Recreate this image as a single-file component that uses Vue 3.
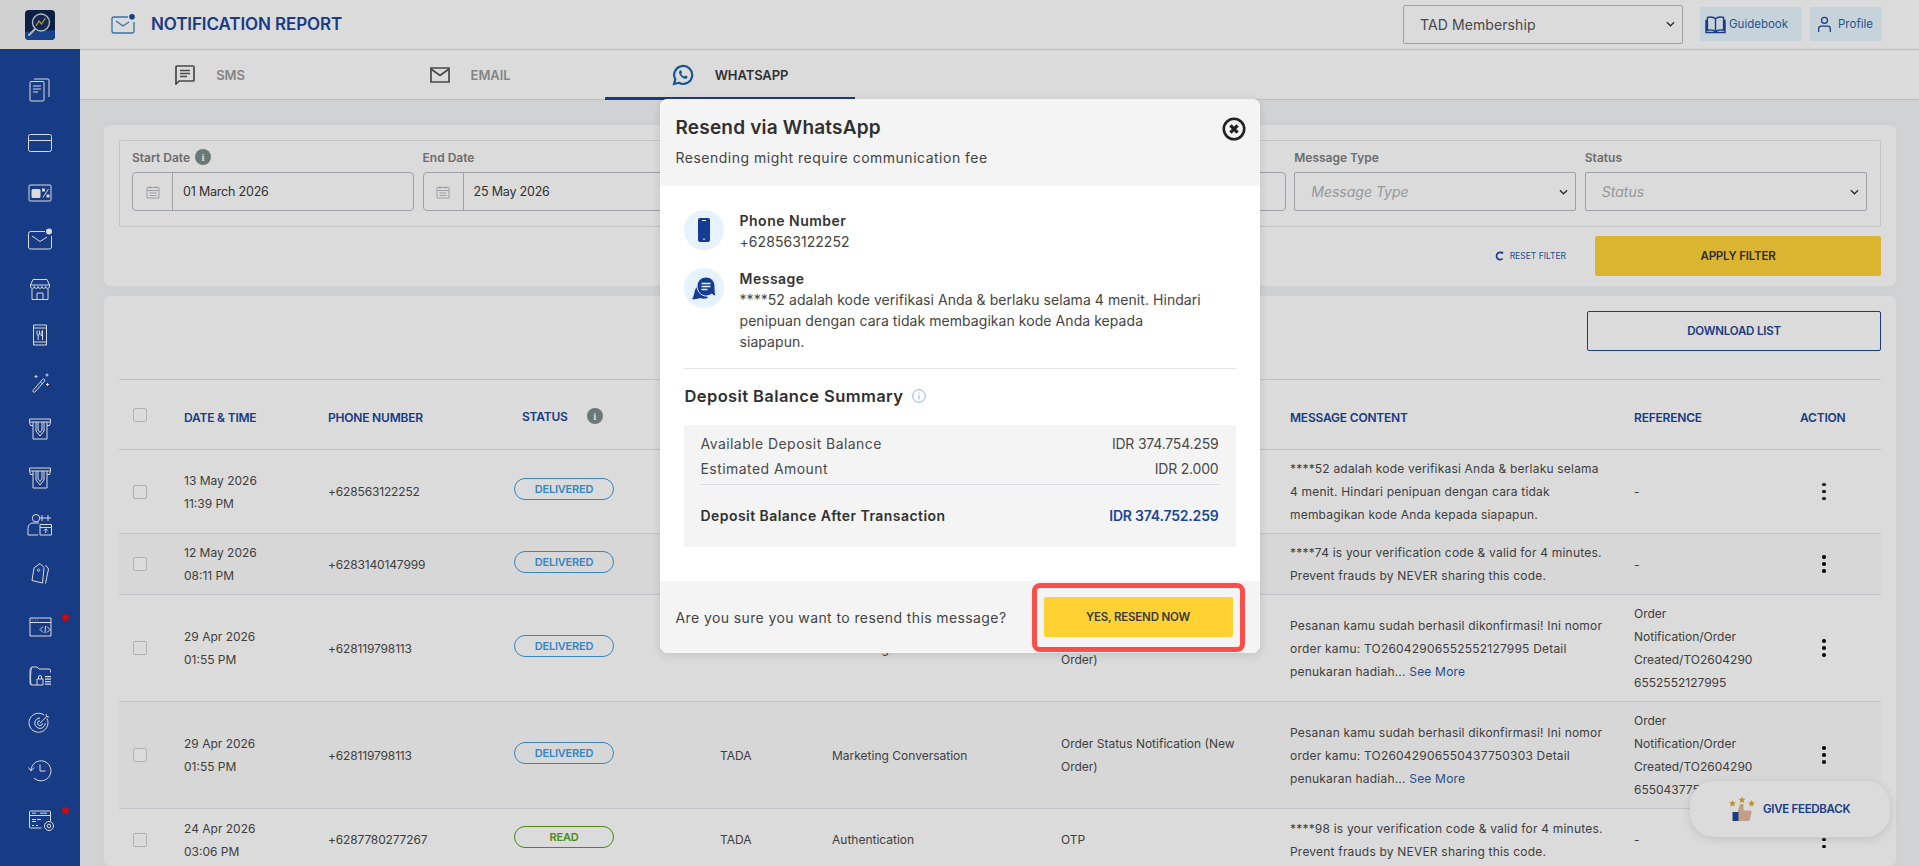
<template>
<div class="app">
    <aside class="sidebar">
        <div class="logo-wrap">
            <svg class="logo" viewBox="0 0 30 30">
                <rect width="30" height="30" rx="4" fill="#10264f"/>
                <path d="M0 22L30 20V26a4 4 0 0 1-4 4H4a4 4 0 0 1-4-4Z" fill="#1d4da3"/>
                <circle cx="16" cy="12.5" r="8.5" fill="#17305f" stroke="#cfd6df" stroke-width="1.4"/>
                <path d="M11 16l3-5 2.5 3 4-6" fill="none" stroke="#d9b93a" stroke-width="1.2"/>
                <path d="M10 19l-6 6" stroke="#cfd6df" stroke-width="2" stroke-linecap="round"/>
            </svg>
        </div>
        <nav class="side-nav">
            <div
                v-for="(item, index) in sideIcons"
                :key="index"
                class="side-item"
                :style="{ marginTop: item.gap + 'px' }"
            >
                <svg class="side-icon" viewBox="0 0 28 28">
                    <path :d="item.d" />
                    <path v-if="item.fill" :d="item.fill" class="solid" />
                </svg>
                <span v-if="item.alert" class="alert-dot"></span>
            </div>
        </nav>
    </aside>

    <div class="main">
        <header class="topbar">
            <div class="page-title">
                <svg class="title-icon" viewBox="0 0 24 20">
                    <path d="M17 3H3a2 2 0 0 0-2 2v12a2 2 0 0 0 2 2h18a2 2 0 0 0 2-2V8M5 7l7 5 6-4" fill="none" stroke="#3f86c2" stroke-width="1.3"/>
                    <circle cx="21" cy="2.8" r="2.8" fill="#1a4a9e"/>
                </svg>
                <h1>NOTIFICATION REPORT</h1>
            </div>
            <div class="top-actions">
                <div class="merchant-select">
                    <span>TAD Membership</span>
                    <svg class="chev" viewBox="0 0 10 6"><path d="M1 1l4 4 4-4" /></svg>
                </div>
                <a class="help-btn guide">
                    <svg viewBox="0 0 22 20" class="help-icon">
                        <path d="M11 4C9 2 5 2 2.5 2.5V16C5 15.500 9 15.500 11 17.500 13 15.500 17 15.500 19.500 16V2.500C17 2 13 2 11 4ZM11 4V17.500M1 5V18.500H21V5" />
                    </svg>
                    Guidebook
                </a>
                <a class="help-btn profile">
                    <svg viewBox="0 0 18 20" class="help-icon">
                        <circle cx="9" cy="5" r="3.600" />
                        <path d="M2 19V15a3 3 0 0 1 3-3h8a3 3 0 0 1 3 3v4" />
                    </svg>
                    Profile
                </a>
            </div>
        </header>

        <div class="tabs">
            <div class="tab">
                <svg class="tab-icon" viewBox="0 0 20 20">
                    <path d="M1 19V2a1 1 0 0 1 1-1h16a1 1 0 0 1 1 1v13a1 1 0 0 1-1 1H4ZM5 5.500h10M5 8.500h10M5 11.500h7" />
                </svg>
                <span>SMS</span>
            </div>
            <div class="tab">
                <svg class="tab-icon" viewBox="0 0 20 20">
                    <path d="M1 3h18v14H1ZM1 4l9 6.500L19 4" />
                </svg>
                <span>EMAIL</span>
            </div>
            <div class="tab active">
                <svg class="tab-icon wa" viewBox="0 0 22 22">
                    <path d="M2 20l1.300-4.700A9 9 0 1 1 6.800 18.800Z" />
                    <path class="wa-fill" d="M8 6.500c-1 .8-1.300 2-.6 3.500 1 2 2.600 3.600 4.600 4.500 1.500.6 2.700.3 3.400-.8.300-.5.300-1 0-1.200l-1.800-.9c-.3-.1-.6 0-.8.3l-.6.7c-1.300-.5-2.400-1.500-3-2.800l.6-.7c.2-.2.2-.5.100-.8L9.200 6.600c-.2-.4-.8-.4-1.200-.1Z" />
                </svg>
                <span>WHATSAPP</span>
            </div>
        </div>

        <div class="content">
            <section class="card filter-card">
                <div class="filter-box">
                    <div v-for="field in filters" :key="field.label" class="field">
                        <label>
                            {{ field.label }}
                            <span v-if="field.info" class="info-dot small">i</span>
                        </label>
                        <div v-if="field.date" class="input date">
                            <span class="cal">
                                <svg viewBox="0 0 14 14"><path d="M1 2.500h12v10.500H1ZM1 5.500h12M4 1v2.500M10 1v2.500M3.500 8h7M3.500 10.500h7" /></svg>
                            </span>
                            <span class="date-value">{{ field.value }}</span>
                        </div>
                        <div v-else-if="field.text" class="input text-input">
                            <span class="placeholder">{{ field.value }}</span>
                        </div>
                        <div v-else class="input select">
                            <span class="placeholder">{{ field.value }}</span>
                            <svg class="chev" viewBox="0 0 10 6"><path d="M1 1l4 4 4-4" /></svg>
                        </div>
                    </div>
                </div>
                <div class="filter-actions">
                    <a class="reset">
                        <svg viewBox="0 0 10 10"><path d="M8.500 2.200A4 4 0 1 0 8.500 7.800" /><path d="M6.500 0.800l2.500 1.900L9 0Z" class="solid-blue" /></svg>
                        RESET FILTER
                    </a>
                    <button class="apply">APPLY FILTER</button>
                </div>
            </section>

            <section class="card list-card">
                <div class="list-head">
                    <button class="download">DOWNLOAD LIST</button>
                </div>
                <div class="row head">
                    <div class="c-check"><span class="check"></span></div>
                    <div>DATE &amp; TIME</div>
                    <div>PHONE NUMBER</div>
                    <div class="status-head">STATUS <span class="info-dot">i</span></div>
                    <div>SENDER</div>
                    <div>CATEGORY</div>
                    <div>TEMPLATE</div>
                    <div>MESSAGE CONTENT</div>
                    <div>REFERENCE</div>
                    <div class="action-head">ACTION</div>
                </div>
                <div
                    v-for="(row, index) in rows"
                    :key="index"
                    class="row"
                    :class="{ tinted: index % 2 === 1 }"
                    :style="{ height: row.height + 'px' }"
                >
                    <div class="c-check"><span class="check"></span></div>
                    <div class="lines">{{ row.date }}<br>{{ row.time }}</div>
                    <div class="phone">{{ row.phone }}</div>
                    <div><span class="badge" :class="row.status.toLowerCase()">{{ row.status }}</span></div>
                    <div>TADA</div>
                    <div>{{ row.category }}</div>
                    <div class="lines">{{ row.template }}</div>
                    <div class="lines message">{{ row.message }}<a v-if="row.more" class="more"> See More</a></div>
                    <div class="lines">{{ row.reference }}</div>
                    <div class="c-action"><span class="dots"><i></i><i></i><i></i></span></div>
                </div>
            </section>
        </div>
    </div>

    <button class="feedback">
        <svg class="fb-icon" viewBox="0 0 26 26">
            <path d="M3.500 7.500m0-3.500l1 2.300 2.400.2-1.800 1.600.6 2.400-2.200-1.300-2.200 1.300.6-2.400L.100 6.500l2.400-.2ZM13 .500l1 2.300 2.400.2-1.800 1.600.6 2.400-2.200-1.300-2.200 1.300.6-2.400-1.800-1.600 2.400-.2ZM22.500 4l1 2.300 2.400.2-1.800 1.600.6 2.400-2.200-1.300-2.200 1.300.6-2.400-1.800-1.600 2.400-.2Z" fill="#e0a92a"/>
            <path d="M11 8h3.500v6.500H21a1.500 1.500 0 0 1 1.500 1.700L21 23.500a2 2 0 0 1-2 1.500H9V14.500Z" fill="#e3b99c"/>
            <rect x="3.500" y="16" width="6" height="9" fill="#1a4a9e"/>
        </svg>
        GIVE FEEDBACK
    </button>

    <div class="overlay">
        <div class="modal">
            <div class="modal-head">
                <div>
                    <h2>Resend via WhatsApp</h2>
                    <p>Resending might require communication fee</p>
                </div>
                <svg class="close" viewBox="0 0 20 20">
                    <circle cx="10" cy="10" r="8.500" />
                    <path d="M7 7l6 6M13 7l-6 6" class="close-x" />
                </svg>
            </div>
            <div class="modal-body">
                <div class="detail">
                    <span class="detail-icon">
                        <svg viewBox="0 0 12 24" class="phone-glyph">
                            <rect x="0" y="0" width="12" height="24" rx="2" fill="#163b95"/>
                            <rect x="4" y="2" width="4" height="1" fill="#e6f3fe"/>
                            <rect x="5.300" y="20.500" width="1.400" height="1.400" fill="#e6f3fe"/>
                        </svg>
                    </span>
                    <div>
                        <strong>Phone Number</strong>
                        <p>+628563122252</p>
                    </div>
                </div>
                <div class="detail">
                    <span class="detail-icon">
                        <svg viewBox="0 0 24 24" class="chat-glyph">
                            <path d="M5 11C2 13 3 19 0 23c3 .5 6 0 8-1 3 1 6 1 8-.5Z" fill="#163b95"/>
                            <path d="M14 1c5 0 9 4 9 9 0 4 0 7 1 10-2 0-3-1-4-2-2 1-4 2-6 2-5 0-9-5-9-10s4-9 9-9Z" fill="#163b95" stroke="#e6f3fe" stroke-width="1"/>
                            <path d="M9.500 7.500h9M9.500 10.500h9M9.500 13.500h6" stroke="#e6f3fe" stroke-width="1.400" fill="none"/>
                        </svg>
                    </span>
                    <div>
                        <strong>Message</strong>
                        <p>****52 adalah kode verifikasi Anda &amp; berlaku selama 4 menit. Hindari<br>penipuan dengan cara tidak membagikan kode Anda kepada<br>siapapun.</p>
                    </div>
                </div>
                <div class="divider"></div>
                <h3>
                    Deposit Balance Summary
                    <svg class="sum-info" viewBox="0 0 14 14">
                        <circle cx="7" cy="7" r="6.300" />
                        <path d="M7 6v4.500M7 3.500v1.200" />
                    </svg>
                </h3>
                <div class="summary">
                    <div class="sum-row"><span>Available Deposit Balance</span><span class="amount">IDR 374.754.259</span></div>
                    <div class="sum-row"><span>Estimated Amount</span><span class="amount">IDR 2.000</span></div>
                    <div class="sum-total"><strong>Deposit Balance After Transaction</strong><strong class="blue">IDR 374.752.259</strong></div>
                </div>
            </div>
            <div class="modal-foot">
                <span>Are you sure you want to resend this message?</span>
                <div class="highlight">
                    <button class="resend">YES, RESEND NOW</button>
                </div>
            </div>
        </div>
    </div>
</div>
</template>

<script setup>
const sideIcons = [
    { gap: 1, d: 'M5 5.500h12a1 1 0 0 1 1 1V24a1 1 0 0 1-1 1H5a1 1 0 0 1-1-1V6.500a1 1 0 0 1 1-1ZM8 3h14a1 1 0 0 1 1 1v17M7 10h8M7 13h8M7 16h5' },
    { gap: 13, d: 'M4.500 5.500h19a2 2 0 0 1 2 2v13a2 2 0 0 1-2 2h-19a2 2 0 0 1-2-2v-13a2 2 0 0 1 2-2ZM2.500 11.500h23' },
    { gap: 10, d: 'M4 6h20a1 1 0 0 1 1 1v14a1 1 0 0 1-1 1H4a1 1 0 0 1-1-1V7a1 1 0 0 1 1-1ZM22.500 10L17 18.500', fill: 'M7 10h6a1.500 1.500 0 0 1 1.500 1.500v6a1.500 1.500 0 0 1-1.500 1.500H7a1.500 1.500 0 0 1-1.500-1.500v-6A1.500 1.500 0 0 1 7 10ZM16 9.500h3v3h-3ZM20.500 15.500h3v3h-3Z' },
    { gap: 7, d: 'M19 5.500H4.500a2 2 0 0 0-2 2V21a2 2 0 0 0 2 2h19a2 2 0 0 0 2-2V10M6 10l8 5.500 7-4.500', fill: 'M23 2.500a3 3 0 1 1 0 6 3 3 0 0 1 0-6Z' },
    { gap: 9, d: 'M7 4.500h14l2.500 5.500H4.500ZM4.500 10v1.500a1.900 1.900 0 0 0 3.800 0 1.900 1.900 0 0 0 3.800 0 1.900 1.900 0 0 0 3.800 0 1.900 1.900 0 0 0 3.800 0 1.900 1.900 0 0 0 3.800 0V10M6 14v10.500h16V14M11 24.500V18h6v6.500' },
    { gap: 6, d: 'M7.500 4h13v20h-13ZM7.500 7h13M7.500 21h13M11 9.500v3.500a1.200 1.200 0 0 0 2.400 0V9.500M12.200 14v5M16.500 19V9.500c-1 1-1.500 2.500-1.500 5h1.500M14 22.500h0' },
    { gap: 7, d: 'M7 22.500l9.500-11a1.300 1.300 0 0 1 2 1.700L9 24a1.300 1.300 0 0 1-2-1.500ZM14.500 14l2 1.800M10 7v3M8.500 8.500h3M21 5.500v3M19.500 7h3M21.500 15v3M20 16.500h3' },
    { gap: 7, d: 'M3.500 4h21v3.500l-1 3h-2.500M7 10.500H4.500l-1-3V4M3.500 7h21M7 7v17h14V7M10 7v9l4 5 4-5V7M12 7v8l2 2.500 2-2.500V7' },
    { gap: 9, d: 'M3.500 4h21v3.500l-1 3h-2.500M7 10.500H4.500l-1-3V4M3.500 7h21M7 7v17h14V7M10 7v9l4 5 4-5V7M12 7v8l2 2.500 2-2.500V7' },
    { gap: 7, d: 'M10 3.500a3.700 3.700 0 1 1 0 7.400 3.700 3.700 0 0 1 0-7.400ZM12 24H2v-7a5 5 0 0 1 5-5h6M16 4v6M13 7h6M22 4v6M19 7h6M14 13.500h11.500V24H14ZM14 16.500h11.500M19.800 22v-4M18 19.500l1.800-1.800 1.800 1.800' },
    { gap: 9, d: 'M14 3.500l4 4-1.500 15.500-10.500-2.500 2-12.500ZM12.500 9a1.200 1.200 0 1 0 .1 0ZM19.500 5l3 4-3 14.500' },
    { gap: 13, alert: true, d: 'M4 5h21v18H4ZM4 9.500h21M17 13.500l-3 3 3 3M21 13.500l3 3-3 3M19.500 13l-.5 7M6.500 7.200h.5M9 7.200h.5M11.500 7.200h.5' },
    { gap: 8, d: 'M4 11v11a2 2 0 0 0 2 2h5M4 11c0-3 .5-5 2-5h5l2 2h10a1.500 1.500 0 0 1 1.500 1.500v2M6 6.500C5 8 4 14 5 24M11 24h6v-6h-6ZM12.500 18v-2a1.500 1.500 0 0 1 3 0v2', fill: 'M19 15h6v1.200h-6ZM19 17.500h6v1.200h-6ZM19 20h6v1.200h-6ZM19 22.500h6v1.200h-6Z' },
    { gap: 8, d: 'M21 9.500a9.500 9.500 0 1 1-3-3.500M14 9a5.200 5.200 0 1 0 5.200 5.200M14 11.800a2.400 2.400 0 1 0 2.400 2.400M14 14.200l7-7M20 5l.5 2.500L23 8' },
    { gap: 7, d: 'M5 14a10 10 0 1 1 3 8M2.500 11.500L5 15l3-3.500M14 8.500V15h5.500' },
    { gap: 10, alert: true, d: 'M4.500 5h19a1 1 0 0 1 1 1v9M4.500 5a1 1 0 0 0-1 1v15a1 1 0 0 0 1 1h11M3.500 9.500h21M6 7.200h4M14 7.200h7M6 13.500h4M6 15.500h4M11 13.500h4M6 19.500h2M10 19.500h2M23 15.500a4.500 4.500 0 1 1 0 9 4.500 4.500 0 0 1 0-9ZM23 18.200a1.800 1.800 0 1 1 0 3.600 1.800 1.800 0 0 1 0-3.600Z' }
]

const filters = [
    { label: 'Start Date', value: '01 March 2026', date: true, info: true },
    { label: 'End Date', value: '25 May 2026', date: true },
    { label: 'Sender', value: 'Sender' },
    { label: 'Phone Number', value: 'Phone Number', text: true },
    { label: 'Message Type', value: 'Message Type' },
    { label: 'Status', value: 'Status' }
]

const otp = 'Prevent frauds by NEVER sharing this code.'
const orderTemplate = 'Order Status Notification (New\nOrder)'

const rows = [
    {
        height: 84, date: '13 May 2026', time: '11:39 PM', phone: '+628563122252', status: 'DELIVERED',
        category: 'Authentication', template: 'OTP',
        message: '****52 adalah kode verifikasi Anda & berlaku selama\n4 menit. Hindari penipuan dengan cara tidak\nmembagikan kode Anda kepada siapapun.',
        reference: '-'
    },
    {
        height: 61, date: '12 May 2026', time: '08:11 PM', phone: '+6283140147999', status: 'DELIVERED',
        category: 'Authentication', template: 'OTP',
        message: '****74 is your verification code & valid for 4 minutes.\n' + otp,
        reference: '-'
    },
    {
        height: 107, date: '29 Apr 2026', time: '01:55 PM', phone: '+628119798113', status: 'DELIVERED',
        category: 'Marketing Conversation', template: orderTemplate,
        message: 'Pesanan kamu sudah berhasil dikonfirmasi! Ini nomor\norder kamu: TO26042906552552127995 Detail\npenukaran hadiah...', more: true,
        reference: 'Order\nNotification/Order\nCreated/TO2604290\n6552552127995'
    },
    {
        height: 107, date: '29 Apr 2026', time: '01:55 PM', phone: '+628119798113', status: 'DELIVERED',
        category: 'Marketing Conversation', template: orderTemplate,
        message: 'Pesanan kamu sudah berhasil dikonfirmasi! Ini nomor\norder kamu: TO26042906550437750303 Detail\npenukaran hadiah...', more: true,
        reference: 'Order\nNotification/Order\nCreated/TO2604290\n6550437750303'
    },
    {
        height: 62, date: '24 Apr 2026', time: '03:06 PM', phone: '+6287780277267', status: 'READ',
        category: 'Authentication', template: 'OTP',
        message: '****98 is your verification code & valid for 4 minutes.\n' + otp,
        reference: '-'
    }
]
</script>

<style>
html, body {
    margin: 0;
    height: 100%;
    overflow: hidden;
}
</style>

<style scoped>
.app {
    display: flex;
    height: 866px;
    overflow: hidden;
    font-family: "Inter", "Noto Sans", sans-serif;
    background: #f4f5f7;
    color: #4a4a4a;
    position: relative;
}

.sidebar {
    width: 80px;
    flex: none;
    background: #1b459b;
}

.logo-wrap {
    height: 49px;
    background: #f4f4f4;
    display: flex;
    align-items: center;
    justify-content: center;
    padding-right: 1px;
    box-sizing: border-box;
}

.logo {
    width: 30px;
    height: 30px;
}

.side-nav {
    padding-top: 20px;
}

.side-item {
    height: 40px;
    display: flex;
    align-items: center;
    justify-content: center;
    position: relative;
}

.side-icon {
    width: 28px;
    height: 28px;
    fill: none;
    stroke: #fff;
    stroke-width: 1;
}

.side-icon .solid {
    fill: #fff;
    stroke: none;
}

.alert-dot {
    position: absolute;
    left: 62px;
    top: 7px;
    width: 7px;
    height: 7px;
    border-radius: 50%;
    background: #e0101a;
}

.main {
    flex: 1;
    min-width: 0;
    display: flex;
    flex-direction: column;
}

.topbar {
    height: 50px;
    flex: none;
    box-sizing: border-box;
    background: #fff;
    border-bottom: 1px solid #dadada;
    display: flex;
    justify-content: space-between;
    align-items: center;
    padding: 0 37px 1px 31px;
}

.page-title {
    display: flex;
    align-items: center;
    gap: 16px;
}

.title-icon {
    width: 24px;
    height: 20px;
}

h1 {
    margin: 0;
    font-size: 17px;
    font-weight: 600;
    color: #1b459b;
    letter-spacing: -0.1px;
}

.top-actions {
    display: flex;
    align-items: center;
}

.merchant-select {
    width: 280px;
    height: 39px;
    box-sizing: border-box;
    border: 1px solid #b9bdc4;
    border-radius: 2px;
    padding: 0 7px 0 16px;
    display: flex;
    align-items: center;
    justify-content: space-between;
    font-size: 14px;
    color: #555;
    margin-right: 17px;
    letter-spacing: 0.1px;
}

.chev {
    width: 9px;
    height: 6px;
    fill: none;
    stroke: #333;
    stroke-width: 1.4;
}

.help-btn {
    height: 34px;
    display: flex;
    align-items: center;
    box-sizing: border-box;
    background: #e8f6ff;
    color: #2e5fa8;
    font-size: 11.500px;
    gap: 3px;
}

.guide {
    width: 102px;
    padding-left: 5px;
    margin-right: 8px;
}

.profile {
    width: 72px;
    padding-left: 7px;
    gap: 6px;
}

.help-icon {
    fill: none;
    stroke: #1b459b;
    stroke-width: 1.500;
    height: 19px;
    width: 21px;
}

.profile .help-icon {
    width: 15px;
}

.tabs {
    height: 50px;
    flex: none;
    box-sizing: border-box;
    background: #fff;
    border-bottom: 1px solid #e0e0e0;
    display: flex;
}

.tab {
    width: 260px;
    display: flex;
    align-items: center;
    justify-content: center;
    gap: 21px;
    font-size: 13px;
    font-weight: 600;
    color: #9b9b9b;
    position: relative;
    letter-spacing: -0.1px;
    padding-top: 1px;
    box-sizing: border-box;
}

.tab.active {
    color: #3a3a3a;
}

.tab.active::after {
    content: "";
    position: absolute;
    left: 5px;
    right: 5px;
    bottom: -1px;
    height: 3px;
    background: #1b459b;
}

.tab-icon {
    width: 20px;
    height: 20px;
    fill: none;
    stroke: #555;
    stroke-width: 1.700;
}

.tab-icon.wa {
    width: 22px;
    height: 22px;
    stroke: #1b62b0;
    stroke-width: 2.200;
}

.wa-fill {
    fill: #1b62b0;
    stroke: none;
}

.content {
    flex: 1;
    min-height: 0;
    padding: 25px 23px 0 24px;
    display: flex;
    flex-direction: column;
    gap: 10px;
    overflow: hidden;
}

.card {
    background: #fff;
    border-radius: 6px;
    box-shadow: 0 0 8px rgba(0, 0, 0, 0.04);
    padding: 0 15px;
    flex: none;
}

.filter-card {
    height: 161px;
    box-sizing: border-box;
    padding-top: 15px;
}

.filter-box {
    height: 87px;
    box-sizing: border-box;
    border: 1px solid #e6e6e6;
    border-radius: 2px;
    padding: 8px 13px 0 12px;
    display: grid;
    grid-template-columns: repeat(6, 1fr);
    column-gap: 8.400px;
}

.field label {
    display: flex;
    align-items: center;
    gap: 4px;
    height: 16px;
    margin-bottom: 7px;
    font-size: 12px;
    font-weight: 600;
    color: #808080;
}

.info-dot {
    display: inline-flex;
    align-items: center;
    justify-content: center;
    width: 16px;
    height: 16px;
    border-radius: 50%;
    background: #7e8c8c;
    color: #fff;
    font-size: 11px;
    font-weight: 800;
    font-family: "Liberation Serif", serif;
}

.info-dot.small {
    margin-left: 1px;
}

.input {
    height: 39px;
    box-sizing: border-box;
    border: 1px solid #b9bdc4;
    border-radius: 4px;
    display: flex;
    align-items: center;
    font-size: 12.500px;
}

.cal {
    width: 39px;
    height: 100%;
    display: flex;
    align-items: center;
    justify-content: center;
    border-right: 1px solid #b9bdc4;
}

.cal svg {
    width: 14px;
    height: 14px;
    fill: none;
    stroke: #b6bac0;
    stroke-width: 1;
}

.date-value {
    padding-left: 10px;
    color: #3a3a3a;
    letter-spacing: -0.2px;
}

.select {
    border-radius: 2px;
    justify-content: space-between;
    padding: 0 7px 0 16px;
}

.text-input {
    padding-left: 16px;
}

.placeholder {
    font-style: italic;
    color: #aeb1b5;
    font-size: 14px;
}

.filter-actions {
    display: flex;
    justify-content: flex-end;
    align-items: center;
    margin-top: 9px;
}

.reset {
    display: flex;
    align-items: center;
    gap: 6px;
    color: #2a5aa6;
    font-size: 8.500px;
    margin-right: 29px;
}

.reset svg {
    width: 9px;
    height: 10px;
    fill: none;
    stroke: #1b459b;
    stroke-width: 1.800;
}

.solid-blue {
    fill: #1b459b;
    stroke: none;
}

.apply {
    width: 286px;
    height: 40px;
    border: none;
    border-radius: 2px;
    background: #ffd337;
    color: #333;
    font: 600 11.500px "Inter", sans-serif;
    letter-spacing: -0.2px;
}

.list-card {
    flex: 1;
    min-height: 0;
    overflow: hidden;
    padding-bottom: 0;
}

.list-head {
    height: 84px;
    box-sizing: border-box;
    border-bottom: 1px solid #dfe1e4;
    display: flex;
    justify-content: flex-end;
    align-items: flex-start;
    padding-top: 15px;
}

.download {
    width: 294px;
    height: 40px;
    background: #fff;
    border: 1px solid #1b459b;
    border-radius: 2px;
    color: #1b459b;
    font: 600 11.500px "Inter", sans-serif;
    letter-spacing: -0.2px;
}

.row {
    display: grid;
    grid-template-columns: 65px 144px 186px 206px 112px 229px 229px 344px 155px 93px;
    align-items: center;
    box-sizing: border-box;
    border-bottom: 1px solid #e3e5ea;
    font-size: 12px;
    line-height: 23px;
    color: #4a4a4a;
}

.row.head {
    height: 70px;
    font-size: 12px;
    font-weight: 600;
    color: #1b459b;
    letter-spacing: -0.2px;
    padding-top: 6px;
    border-color: #dfe1e4;
}

.row.tinted {
    background: #fbfbfb;
}

.phone {
    letter-spacing: -0.15px;
}

.message {
    letter-spacing: 0.2px;
}

.c-check {
    padding-left: 14px;
    display: flex;
}

.check {
    width: 14px;
    height: 14px;
    box-sizing: border-box;
    border: 1px solid #cfcfcf;
    border-radius: 2px;
    background: #fff;
}

.head .c-check {
    margin-top: -5px;
}

.status-head {
    display: flex;
    align-items: center;
    gap: 19px;
    padding-left: 8px;
    color: #1b459b;
    margin-top: -3px;
}

.lines {
    white-space: pre-line;
}

.action-head {
    padding-left: 11px;
}

.more {
    color: #2a5aa6;
}

.badge {
    display: block;
    width: 100px;
    height: 22px;
    box-sizing: border-box;
    border: 1px solid #3f9de8;
    border-radius: 11px;
    text-align: center;
    font-size: 11px;
    line-height: 20px;
    font-weight: 600;
    color: #3f9de8;
    letter-spacing: -0.2px;
    margin-top: -5px;
}

.badge.read {
    border-color: #5aa310;
    color: #5aa310;
}

.c-action {
    display: flex;
    padding-left: 33px;
}

.dots {
    display: flex;
    flex-direction: column;
    gap: 3.500px;
}

.dots i {
    width: 3.500px;
    height: 3.500px;
    border-radius: 50%;
    background: #111;
}

.feedback {
    position: absolute;
    left: 1690px;
    top: 781px;
    width: 200px;
    height: 56px;
    border: none;
    border-radius: 24px;
    background: #fff;
    box-shadow: 0 2px 10px rgba(0, 0, 0, 0.12);
    color: #1b459b;
    font: 600 11.500px "Inter", sans-serif;
    letter-spacing: -0.3px;
    display: flex;
    align-items: center;
    gap: 8px;
    padding: 0 0 0 39px;
    white-space: nowrap;
}

.fb-icon {
    width: 26px;
    height: 26px;
    flex: none;
}

.overlay {
    position: absolute;
    inset: 0;
    background: rgba(0, 0, 0, 0.14);
    display: flex;
    justify-content: center;
    align-items: flex-start;
    padding-top: 99px;
    box-sizing: border-box;
}

.modal {
    width: 600px;
    height: 554px;
    background: #fff;
    border-radius: 8px;
    overflow: hidden;
    display: flex;
    flex-direction: column;
    box-shadow: 0 2px 10px rgba(0, 0, 0, 0.12);
    color: #444;
}

.modal-head {
    height: 87px;
    flex: none;
    background: #f4f4f4;
    padding: 16px 16px 0;
    box-sizing: border-box;
    display: flex;
    justify-content: space-between;
    align-items: flex-start;
}

.modal-head h2 {
    margin: 0;
    font-size: 19px;
    line-height: 26px;
    font-weight: 600;
    color: #303030;
    letter-spacing: 0.2px;
}

.modal-head p {
    margin: 7px 0 0;
    font-size: 14px;
    line-height: 20px;
    color: #444;
    letter-spacing: 0.5px;
}

.close {
    width: 24px;
    height: 24px;
    margin: 2px -2px 0 0;
    fill: none;
    stroke: #222;
    stroke-width: 2.200;
}

.close-x {
    stroke-width: 2.800;
}

.modal-body {
    flex: 1;
    padding: 24px 24px 0;
}

.detail {
    display: flex;
    gap: 16px;
    font-size: 14px;
    line-height: 21px;
    margin-bottom: 16px;
}

.detail strong {
    font-weight: 600;
    color: #333;
    display: block;
    letter-spacing: 0.5px;
}

.detail p {
    margin: 0;
    color: #444;
    white-space: nowrap;
    letter-spacing: 0.06px;
}

.detail-icon {
    width: 40px;
    height: 40px;
    flex: none;
    border-radius: 50%;
    background: #e6f3fe;
    display: flex;
    align-items: center;
    justify-content: center;
}

.phone-glyph {
    width: 12px;
    height: 24px;
}

.chat-glyph {
    width: 24px;
    height: 24px;
}

.divider {
    height: 1px;
    background: #e2e2e2;
}

h3 {
    margin: 16px 0 0 1px;
    font-size: 16.500px;
    line-height: 22px;
    font-weight: 600;
    color: #303030;
    display: flex;
    align-items: center;
    gap: 9px;
    letter-spacing: 0.4px;
}

.sum-info {
    width: 14px;
    height: 14px;
    fill: none;
    stroke: #8fb0df;
    stroke-width: 1;
}

.summary {
    margin-top: 18px;
    height: 122px;
    box-sizing: border-box;
    background: #f4f4f4;
    padding: 6px 17px 0;
    font-size: 14px;
}

.sum-row {
    display: flex;
    justify-content: space-between;
    line-height: 25px;
    color: #4a4a4a;
    letter-spacing: 0.44px;
}

.amount {
    letter-spacing: -0.2px;
}

.sum-total {
    margin-top: 3px;
    border-top: 1px solid #d9dce1;
    padding-top: 21px;
    display: flex;
    justify-content: space-between;
    line-height: 20px;
}

.sum-total strong {
    font-weight: 600;
    color: #303030;
    letter-spacing: 0.45px;
}

.sum-total .blue {
    color: #1b459b;
    letter-spacing: -0.2px;
}

.modal-foot {
    height: 72px;
    flex: none;
    background: #f4f4f4;
    display: flex;
    align-items: center;
    justify-content: space-between;
    padding: 0 15px 0 16px;
    font-size: 14px;
    letter-spacing: 0.4px;
}

.highlight {
    width: 213px;
    height: 69px;
    box-sizing: border-box;
    border: 5px solid #f94f4b;
    border-radius: 8px;
    display: flex;
    align-items: center;
    justify-content: center;
}

.resend {
    width: 189px;
    height: 40px;
    border: none;
    border-radius: 2px;
    background: #ffd133;
    color: #3a3a3a;
    font: 600 11.500px "Inter", sans-serif;
    letter-spacing: -0.2px;
}
</style>
